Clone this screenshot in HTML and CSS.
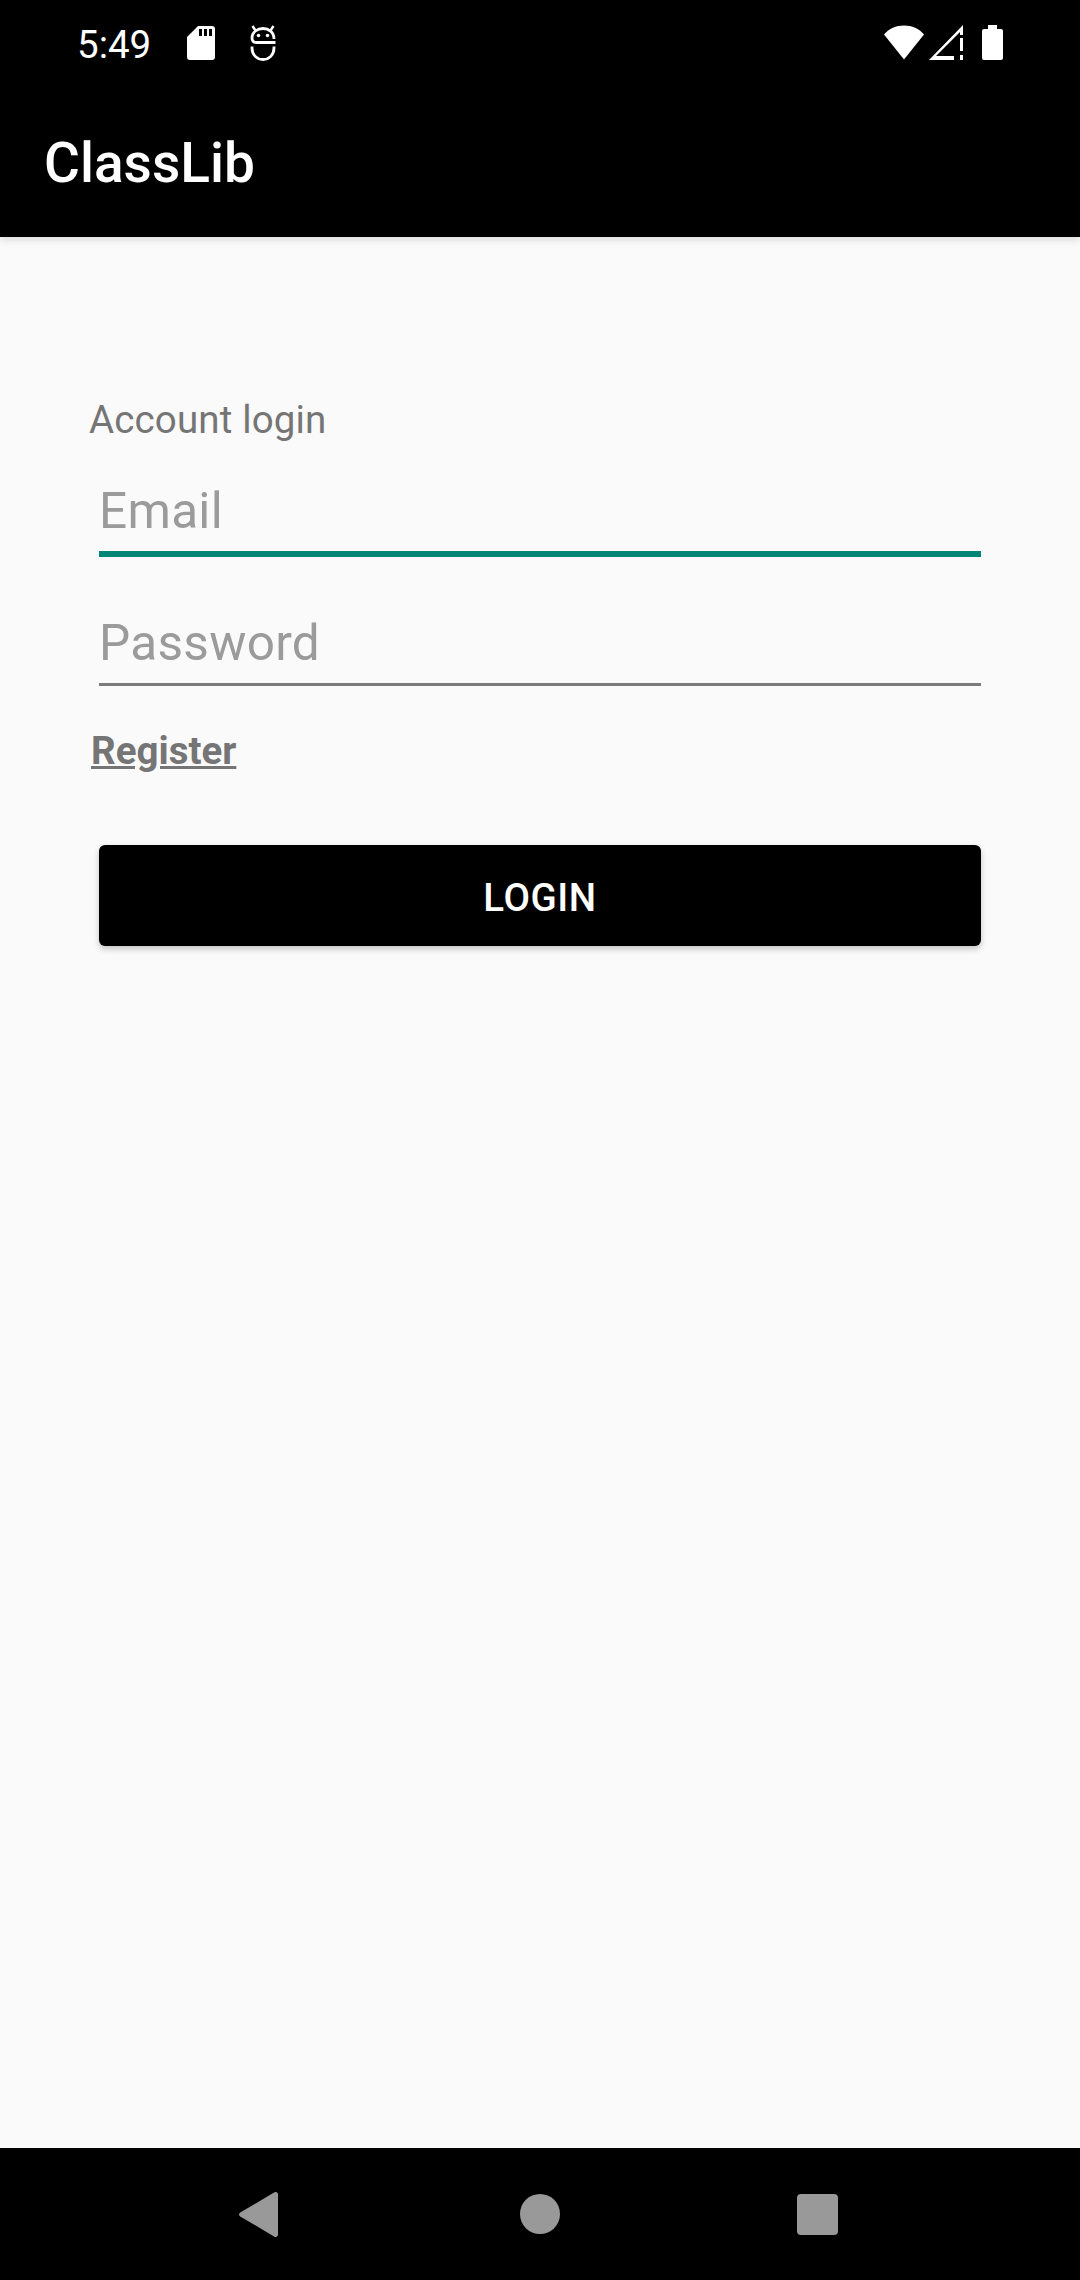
FILE: index.html
```html
<!DOCTYPE html>
<html lang="en">
<head>
  <meta charset="UTF-8">
  <meta name="viewport" content="width=device-width, initial-scale=1.0">
  <title>ClassLib</title>
  <link rel="stylesheet" href="styles.css">
</head>
<body>
  <div class="screen">
    <header class="top">
      <div class="status-bar">
        <span class="clock">5:49</span>
        <!-- SD card -->
        <svg class="icon-sd" viewBox="0 0 28 34" width="28" height="34">
          <path fill="#fff" d="M11 0H25a3 3 0 0 1 3 3V31a3 3 0 0 1-3 3H3a3 3 0 0 1-3-3V11ZM12 3V10H15V3ZM17 3V10H20V3ZM22 3V10H25V3Z" fill-rule="evenodd"/>
        </svg>
        <!-- android head -->
        <svg class="icon-droid" viewBox="0 0 26 36" width="26" height="36">
          <path fill="none" stroke="#fff" stroke-width="2.8" d="M24 14C24 7 18.500 3.500 13 3.500S2 7 2 13C2 16 4 17.500 6.500 17.500H25.500"/>
          <path fill="none" stroke="#fff" stroke-width="2.8" d="M2 21.500V23C2 30 7 34.500 13 34.500S24 30 24 23V21.500"/>
          <path fill="none" stroke="#fff" stroke-width="2.4" d="M2.500 1 5.500 5.500M23.500 1 20.500 5.500"/>
          <circle cx="8.500" cy="10.500" r="1.800" fill="#fff"/>
          <circle cx="17.500" cy="10.500" r="1.800" fill="#fff"/>
        </svg>
        <div class="status-right">
          <svg class="icon-wifi" viewBox="0 0 42 35" width="42" height="35">
            <path fill="#fff" d="M1 9.500C6 3.500 13 .5 21 .5S36 3.500 41 9.500L21 34.500Z"/>
          </svg>
          <svg class="icon-signal" viewBox="0 0 34 35" width="34" height="35">
            <path fill="#fff" fill-rule="evenodd" d="M34 0V10H31V7L7 31H25V35H0Z"/>
            <path fill="#fff" d="M31 13H34V26H31ZM31 30H34V35H31Z"/>
          </svg>
          <svg class="icon-battery" viewBox="0 0 21 35" width="21" height="35">
            <path fill="#fff" d="M6 0H15V4H19A2 2 0 0 1 21 6V33A2 2 0 0 1 19 35H2A2 2 0 0 1 0 33V6A2 2 0 0 1 2 4H6Z"/>
          </svg>
        </div>
      </div>
      <div class="app-bar">ClassLib</div>
    </header>

    <main class="content">
      <p class="form-title">Account login</p>
      <input class="field field-email" type="text" placeholder="Email">
      <input class="field field-password" type="password" placeholder="Password">
      <a class="register" href="#">Register</a>
      <button class="login-btn">LOGIN</button>
    </main>

    <nav class="nav-bar">
      <svg viewBox="0 0 44 45" width="44" height="45">
        <path fill="#999" d="M35 .6C37 -.8 39 .4 39 2.500V42.500C39 44.600 37 45.800 35 44.400L1.200 24.500C-.4 23.500 -.4 21.500 1.200 20.500Z"/>
      </svg>
      <svg viewBox="0 0 40 40" width="40" height="40">
        <circle cx="20" cy="20" r="20" fill="#999"/>
      </svg>
      <svg viewBox="0 0 41 41" width="41" height="41">
        <rect width="41" height="41" rx="4" fill="#999"/>
      </svg>
    </nav>
  </div>
</body>
</html>
```

FILE: styles.css
```css
* {
  margin: 0;
  padding: 0;
  box-sizing: border-box;
}

body {
  font-family: Roboto, "Liberation Sans", sans-serif;
  background-color: #fafafa;
}

.screen {
  width: 1080px;
  height: 2280px;
  display: flex;
  flex-direction: column;
  overflow: hidden;
}

.top {
  background: #000;
  color: #fff;
  height: 237px;
  flex-shrink: 0;
  box-shadow: 0 3px 8px rgba(0, 0, 0, 0.12);
  position: relative;
}

.status-bar {
  height: 63px;
  padding: 25px 77px 0 77px;
  display: flex;
  align-items: flex-start;
}

.clock {
  font-size: 38.5px;
  line-height: 36px;
  width: 110px;
  margin-top: 2px;
}

.icon-sd {
  margin-top: 1px;
  margin-right: 35px;
}

.status-right {
  margin-left: auto;
  display: flex;
  gap: 4px;
}

.icon-signal {
  margin-right: 15px;
}

.app-bar {
  font-size: 55px;
  font-weight: 500;
  line-height: 62px;
  padding: 69px 0 0 44px;
}

.content {
  flex: 1;
  display: flex;
  flex-direction: column;
  padding: 0 99px;
}

.form-title {
  font-size: 38.5px;
  line-height: 44px;
  letter-spacing: 0.15px;
  color: #757575;
  margin: 161px 0 0 -10px;
}

.field {
  display: block;
  width: 100%;
  border: none;
  background: transparent;
  font-family: inherit;
  font-size: 49.5px;
  letter-spacing: 0.3px;
  outline: none;
}

.field::placeholder {
  color: #9b9b9b;
  opacity: 1;
}

.field-email {
  height: 110px;
  margin-top: 5px;
  padding-top: 24px;
  border-bottom: 6px solid #008577;
}

.field-password {
  height: 129px;
  padding-top: 46px;
  border-bottom: 3px solid #7b7b7b;
}

.register {
  font-size: 38.5px;
  font-weight: 700;
  line-height: 46px;
  color: #757575;
  margin: 42px 0 0 -8px;
  align-self: flex-start;
}

.login-btn {
  height: 101px;
  margin-top: 71px;
  padding-top: 3px;
  background: #000;
  color: #fff;
  border: none;
  border-radius: 6px;
  font-family: inherit;
  font-size: 38.5px;
  font-weight: 500;
  letter-spacing: 0.6px;
  box-shadow: 0 3px 6px rgba(0, 0, 0, 0.22);
}

.nav-bar {
  height: 132px;
  flex-shrink: 0;
  background: #000;
  display: flex;
  justify-content: center;
  align-items: center;
  gap: 237px;
  padding: 0 3px 0 0;
}
```
